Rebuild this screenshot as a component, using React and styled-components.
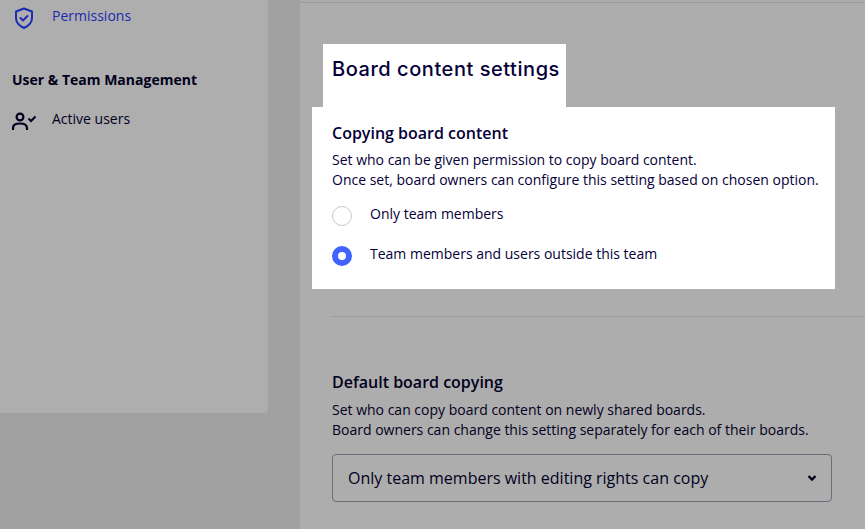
import React from 'react';
import styled, { createGlobalStyle } from 'styled-components';

const GlobalStyle = createGlobalStyle`
  html, body {
    margin: 0;
    padding: 0;
    height: 100%;
    overflow: hidden;
    background: #a1a1a1;
    font-family: 'Open Sans', 'Liberation Sans', sans-serif;
    color: #050038;
  }
`;

const Page = styled.div`
  display: flex;
  width: 865px;
  height: 529px;
  overflow: hidden;
`;

const SidebarColumn = styled.aside`
  width: 300px;
  flex-shrink: 0;
  background: #a1a1a1;
`;

const SidebarCard = styled.div`
  width: 268px;
  height: 413px;
  box-sizing: border-box;
  background: #aeaeae;
  border-bottom-right-radius: 4px;
  padding-top: 5px;
`;

const NavRow = styled.div`
  display: flex;
  align-items: flex-start;
  height: 26px;
  padding-left: 12px;
  font-size: 14px;
  line-height: 22px;
  color: ${(p) => (p.$active ? '#1c2ab0' : '#02001c')};
`;

const NavIcon = styled.svg`
  width: 28px;
  height: 24px;
  flex-shrink: 0;
  margin-right: 12px;
  margin-top: ${(p) => p.$top || 0}px;
`;

const NavGroupTitle = styled.div`
  margin: 38px 0 17px 12px;
  font-size: 14px;
  line-height: 22px;
  font-weight: 700;
  color: #02001c;
`;

const Main = styled.main`
  flex: 1;
  min-width: 0;
  background: #adadad;
`;

const TopLine = styled.div`
  height: 1px;
  margin-top: 2px;
  background: #9a9a9a;
`;

const TitleBox = styled.div`
  width: 243px;
  height: 63px;
  box-sizing: border-box;
  margin: 41px 0 0 23px;
  padding: 11px 0 0 9px;
  background: #fff;
`;

const Title = styled.h1`
  margin: 0;
  font-family: 'Inter', sans-serif;
  font-size: 20px;
  line-height: 28px;
  font-weight: 500;
  letter-spacing: 0.55px;
  white-space: nowrap;
  color: #050038;
`;

const Spotlight = styled.section`
  width: 523px;
  height: 182px;
  box-sizing: border-box;
  margin-left: 12px;
  padding: 15px 0 0 20px;
  background: #fff;
`;

const SectionTitle = styled.h2`
  margin: 0 0 6px;
  font-size: 16px;
  line-height: 22px;
  font-weight: 600;
  color: ${(p) => (p.$dimmed ? '#02001c' : '#050038')};
`;

const Description = styled.p`
  margin: 0;
  font-size: 14px;
  line-height: 20px;
  color: ${(p) => (p.$dimmed ? '#02001c' : '#050038')};
  white-space: nowrap;
`;

const RadioList = styled.div`
  display: flex;
  flex-direction: column;
  gap: 20px;
  margin-top: 16px;
`;

const RadioRow = styled.label`
  display: flex;
  align-items: flex-start;
  height: 20px;
  font-size: 14px;
  line-height: 16px;
  color: #050038;
`;

const RadioCircle = styled.span`
  width: 20px;
  height: 20px;
  box-sizing: border-box;
  flex-shrink: 0;
  margin-right: 18px;
  border-radius: 50%;
  background: #fff;
  border: ${(p) => (p.$checked ? '6px solid #4262ff' : '1px solid #c7c7d1')};
`;

const Divider = styled.hr`
  height: 1px;
  margin: 27px 0 0 32px;
  border: 0;
  background: #9c9c9c;
`;

const LowerSection = styled.section`
  padding: 54px 0 0 32px;
`;

const LowerText = styled.div`
  margin-top: 7px;
`;

const SelectBox = styled.div`
  display: flex;
  align-items: center;
  justify-content: space-between;
  width: 500px;
  height: 48px;
  box-sizing: border-box;
  margin-top: 14px;
  padding: 0 14px 0 15px;
  border: 1px solid #6d6d79;
  border-radius: 4px;
  font-size: 16px;
  color: #02001c;
`;

const Chevron = styled.svg`
  width: 10px;
  height: 8px;
  flex-shrink: 0;
`;

function App() {
  return (
    <Page>
      <GlobalStyle />
      <SidebarColumn>
        <SidebarCard>
          <NavRow $active>
            <NavIcon viewBox="0 0 28 24" fill="none" stroke="#1a2bb5" strokeWidth="2" $top={1}>
              <path d="M12 2.5 L20 5.5 V12 C20 17 16.5 20 12 22 C7.5 20 4 17 4 12 V5.5 Z" strokeLinejoin="round" />
              <path d="M8.5 12 L11 14.5 L15.5 10" strokeLinecap="round" strokeLinejoin="round" />
            </NavIcon>
            Permissions
          </NavRow>
          <NavGroupTitle>User &amp; Team Management</NavGroupTitle>
          <NavRow>
            <NavIcon viewBox="0 0 28 24" fill="none" stroke="#02001c" strokeWidth="2.2" $top={3}>
              <circle cx="8" cy="6" r="3.4" />
              <path d="M1 19 V17 C1 14 4 12.5 8 12.5 C12 12.5 15 14 15 17 V19" />
              <path d="M16.5 7.5 L19 10 L23.5 5.5" />
            </NavIcon>
            Active users
          </NavRow>
        </SidebarCard>
      </SidebarColumn>
      <Main>
        <TopLine />
        <TitleBox>
          <Title>Board content settings</Title>
        </TitleBox>
        <Spotlight>
          <SectionTitle>Copying board content</SectionTitle>
          <Description>Set who can be given permission to copy board content.</Description>
          <Description>Once set, board owners can configure this setting based on chosen option.</Description>
          <RadioList>
            <RadioRow>
              <RadioCircle />
              Only team members
            </RadioRow>
            <RadioRow>
              <RadioCircle $checked />
              Team members and users outside this team
            </RadioRow>
          </RadioList>
        </Spotlight>
        <Divider />
        <LowerSection>
          <SectionTitle $dimmed>Default board copying</SectionTitle>
          <LowerText>
            <Description $dimmed>Set who can copy board content on newly shared boards.</Description>
            <Description $dimmed>Board owners can change this setting separately for each of their boards.</Description>
          </LowerText>
          <SelectBox>
            Only team members with editing rights can copy
            <Chevron viewBox="0 0 10 8" fill="none" stroke="#02001c" strokeWidth="2.4">
              <path d="M1.5 2 L5 5.5 L8.5 2" />
            </Chevron>
          </SelectBox>
        </LowerSection>
      </Main>
    </Page>
  );
}

export default App;
